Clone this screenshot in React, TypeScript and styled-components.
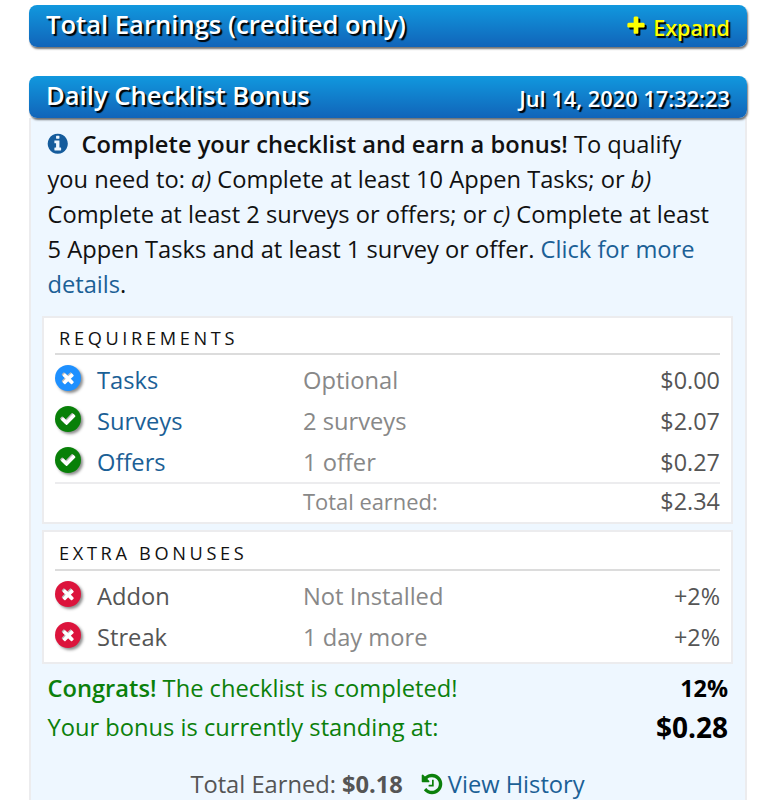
import type { ReactNode } from 'react';
import styled, { createGlobalStyle } from 'styled-components';

const GlobalStyle = createGlobalStyle`
  * {
    box-sizing: border-box;
  }

  body {
    margin: 0;
    height: 800px;
    overflow: hidden;
    background: #fff;
    font-family: "Open Sans", "Noto Sans", sans-serif;
    font-size: 23.68px;
    color: #111;
  }
`;

const Page = styled.main`
  height: 800px;
  overflow: hidden;
  padding: 5px 28px 0 29px;
  white-space: nowrap;
`;

const Glyph = styled.svg`
  width: 1em;
  height: 1em;
  fill: currentColor;
`;

const Header = styled.header<{ $gap?: string }>`
  display: flex;
  justify-content: space-between;
  height: 42px;
  margin-bottom: ${({ $gap }) => $gap || '0'};
  padding: 0 17px;
  border-radius: 8px;
  background: linear-gradient(#1198de, #1164b9);
  box-shadow: 1px 2px 2px rgba(0, 0, 0, 0.55);
  color: #fff;
  font-weight: 600;
  text-shadow: 2px 2px 1px #000;
`;

const HeaderTitle = styled.h2`
  margin: 0;
  font-size: 25.6px;
  font-weight: 600;
  line-height: 40px;
`;

const HeaderAside = styled.div<{ $color?: string; $size?: string }>`
  display: flex;
  align-items: center;
  gap: 6px;
  padding-top: 3px;
  color: ${({ $color }) => $color || '#fff'};
  font-size: ${({ $size }) => $size || '21.8px'};

  svg {
    margin-top: -3px;
    font-size: 22px;
    filter: drop-shadow(2px 2px 0 #000);
  }
`;

const Body = styled.section`
  position: relative;
  z-index: -1;
  height: 700px;
  padding: 8.5px 12px 0 11px;
  border: 2px solid #ececee;
  border-top: 0;
  background: #eef7ff;
`;

const Intro = styled.p`
  margin: 0 0 13.75px;
  padding-left: 5.5px;
  line-height: 35.15px;

  svg {
    margin: 0 12px 0 -1.5px;
    color: #155c9c;
    font-size: 23.5px;
    vertical-align: -3px;
  }

  b {
    font-weight: 600;
  }
`;

const Link = styled.a`
  color: #1b6096;
`;

const Card = styled.div<{ $height: number }>`
  height: ${({ $height }) => $height}px;
  margin-bottom: 6px;
  padding: 0 11px;
  border: 2px solid #ececee;
  background: #fff;
`;

const CardTitle = styled.h3<{ $height: number; $gap: number }>`
  height: ${({ $height }) => $height}px;
  margin: 0 0 ${({ $gap }) => $gap}px;
  padding-left: 4px;
  border-bottom: 2px solid #dcdcdc;
  font-size: 18.2px;
  font-weight: 400;
  line-height: ${({ $height }) => $height + 3}px;
  letter-spacing: 3.65px;
`;

const Row = styled.div`
  display: grid;
  grid-template-columns: 42px 206px 1fr auto;
  height: 41px;
  line-height: 41px;
  color: #555;
`;

const TotalRow = styled(Row)`
  height: 37px;
  margin-top: -1px;
  border-top: 2px solid #ececee;
  font-size: 21.9px;
  line-height: 35px;
`;

const Note = styled.span`
  color: #888;
`;

const Amount = styled.span`
  font-size: 23.4px;
`;

const Badge = styled.span<{ $color: string }>`
  display: flex;
  align-items: center;
  justify-content: center;
  width: 26px;
  height: 26px;
  margin-top: 5px;
  border-radius: 50%;
  background: ${({ $color }) => $color};
  box-shadow: 2px 2px 3px rgba(0, 0, 0, 0.45);
  color: #fff;
  font-size: 16.5px;

  svg {
    margin-top: 1px;
    filter: drop-shadow(-1px -1px 0 #bbb);
  }
`;

const Result = styled.div<{ $height: number }>`
  display: flex;
  justify-content: space-between;
  height: ${({ $height }) => $height}px;
  padding: 0 5px 0 5.5px;
  line-height: ${({ $height }) => $height}px;
  color: #0b800b;

  b {
    font-weight: 600;
  }
`;

const Bonus = styled.strong<{ $size: string }>`
  color: #000;
  font-size: ${({ $size }) => $size};
  font-weight: 700;
`;

const Footer = styled.footer`
  display: flex;
  align-items: center;
  justify-content: center;
  margin-top: 18px;
  line-height: 38px;
  color: #555;

  b {
    margin-left: 6px;
  }

  svg {
    margin: 0 4px 0 17px;
    color: #0b800b;
    font-size: 24px;
  }
`;

const icons = {
  plus: 'M1600 736v192q0 40-28 68t-68 28h-416v416q0 40-28 68t-68 28h-192q-40 0-68-28t-28-68v-416h-416q-40 0-68-28t-28-68v-192q0-40 28-68t68-28h416v-416q0-40 28-68t68-28h192q40 0 68 28t28 68v416h416q40 0 68 28t28 68z',
  times: 'M1490 1322q0 40-28 68l-136 136q-28 28-68 28t-68-28l-294-294-294 294q-28 28-68 28t-68-28l-136-136q-28-28-28-68t28-68l294-294-294-294q-28-28-28-68t28-68l136-136q28-28 68-28t68 28l294 294 294-294q28-28 68-28t68 28l136 136q28 28 28 68t-28 68l-294 294 294 294q28 28 28 68z',
  check: 'M1671 566q0 40-28 68l-724 724-136 136q-28 28-68 28t-68-28l-136-136-362-362q-28-28-28-68t28-68l136-136q28-28 68-28t68 28l294 295 656-657q28-28 68-28t68 28l136 136q28 28 28 68z',
  info: 'M1152 1376v-160q0-14-9-23t-23-9h-96v-512q0-14-9-23t-23-9h-320q-14 0-23 9t-9 23v160q0 14 9 23t23 9h96v320h-96q-14 0-23 9t-9 23v160q0 14 9 23t23 9h448q14 0 23-9t9-23zm-128-896v-160q0-14-9-23t-23-9h-192q-14 0-23 9t-9 23v160q0 14 9 23t23 9h192q14 0 23-9t9-23zm640 416q0 209-103 385.5t-279.5 279.5-385.5 103-385.5-103-279.5-279.5-103-385.5 103-385.5 279.5-279.5 385.5-103 385.5 103 279.5 279.5 103 385.5z',
  history: 'M1664 896q0 156-61 298t-164 245-245 164-298 61q-172 0-327-72.5t-264-204.5q-7-10-6.5-22.5t8.5-20.5l137-138q10-9 25-9 16 2 23 12 73 95 179 147t225 52q104 0 198.5-40.5t163.5-109.5 109.5-163.5 40.5-198.5-40.5-198.5-109.5-163.5-163.5-109.5-198.5-40.5q-98 0-188 35.5t-160 101.5l137 138q31 30 14 69-17 40-59 40h-448q-26 0-45-19t-19-45v-448q0-42 40-59 39-17 69 14l130 129q107-101 244.5-156.5t284.5-55.5q156 0 298 61t245 164 164 245 61 298zm-640-288v448q0 14-9 23t-23 9h-320q-14 0-23-9t-9-23v-64q0-14 9-23t23-9h224v-352q0-14 9-23t23-9h64q14 0 23 9t9 23z',
};

const Icon = ({ name }: { name: keyof typeof icons }) => (
  <Glyph viewBox='0 0 1792 1792'>
    <path d={icons[name]} />
  </Glyph>
);

const requirements = [
  { name: 'Tasks', note: 'Optional', amount: '$0.00', done: false },
  { name: 'Surveys', note: '2 surveys', amount: '$2.07', done: true },
  { name: 'Offers', note: '1 offer', amount: '$0.27', done: true },
];

const extras = [
  { name: 'Addon', note: 'Not Installed', amount: '+2%' },
  { name: 'Streak', note: '1 day more', amount: '+2%' },
];

interface ChecklistRowProps {
  badge: ReactNode;
  name: ReactNode;
  note: string;
  amount: string;
}

const ChecklistRow = ({ badge, name, note, amount }: ChecklistRowProps) => (
  <Row>
    {badge}
    <span>{name}</span>
    <Note>{note}</Note>
    <Amount>{amount}</Amount>
  </Row>
);

export default function App() {
  return (
    <Page>
      <GlobalStyle />
      <Header $gap='29px'>
        <HeaderTitle>Total Earnings (credited only)</HeaderTitle>
        <HeaderAside $color='#ff0' $size='21.5px'><Icon name='plus' /> Expand</HeaderAside>
      </Header>
      <Header>
        <HeaderTitle>Daily Checklist Bonus</HeaderTitle>
        <HeaderAside>Jul 14, 2020 17:32:23</HeaderAside>
      </Header>
      <Body>
        <Intro>
          <Icon name='info' /><b>Complete your checklist and earn a bonus!</b> To qualify<br />
          you need to: <i>a)</i> Complete at least 10 Appen Tasks; or <i>b)</i><br />
          Complete at least 2 surveys or offers; or <i>c)</i> Complete at least<br />
          5 Appen Tasks and at least 1 survey or offer. <Link>Click for more<br />
          details</Link>.
        </Intro>
        <Card $height={208}>
          <CardTitle $height={37} $gap={5}>REQUIREMENTS</CardTitle>
          {requirements.map(({ name, note, amount, done }) => (
            <ChecklistRow
              key={name}
              badge={<Badge $color={done ? '#088008' : '#1e90ff'}><Icon name={done ? 'check' : 'times'} /></Badge>}
              name={<Link>{name}</Link>}
              note={note}
              amount={amount}
            />
          ))}
          <TotalRow>
            <span />
            <span />
            <Note>Total earned:</Note>
            <Amount>$2.34</Amount>
          </TotalRow>
        </Card>
        <Card $height={134}>
          <CardTitle $height={39} $gap={5}>EXTRA BONUSES</CardTitle>
          {extras.map(({ name, note, amount }) => (
            <ChecklistRow
              key={name}
              badge={<Badge $color='#dc143c'><Icon name='times' /></Badge>}
              name={name}
              note={note}
              amount={amount}
            />
          ))}
        </Card>
        <Result $height={37}>
          <span><b>Congrats!</b> The checklist is completed!</span>
          <Bonus $size='23.4px'>12%</Bonus>
        </Result>
        <Result $height={40}>
          <span>Your bonus is currently standing at:</span>
          <Bonus $size='28px'>$0.28</Bonus>
        </Result>
        <Footer>
          Total Earned: <b>$0.18</b> <Icon name='history' /> <Link>View History</Link>
        </Footer>
      </Body>
    </Page>
  );
}
